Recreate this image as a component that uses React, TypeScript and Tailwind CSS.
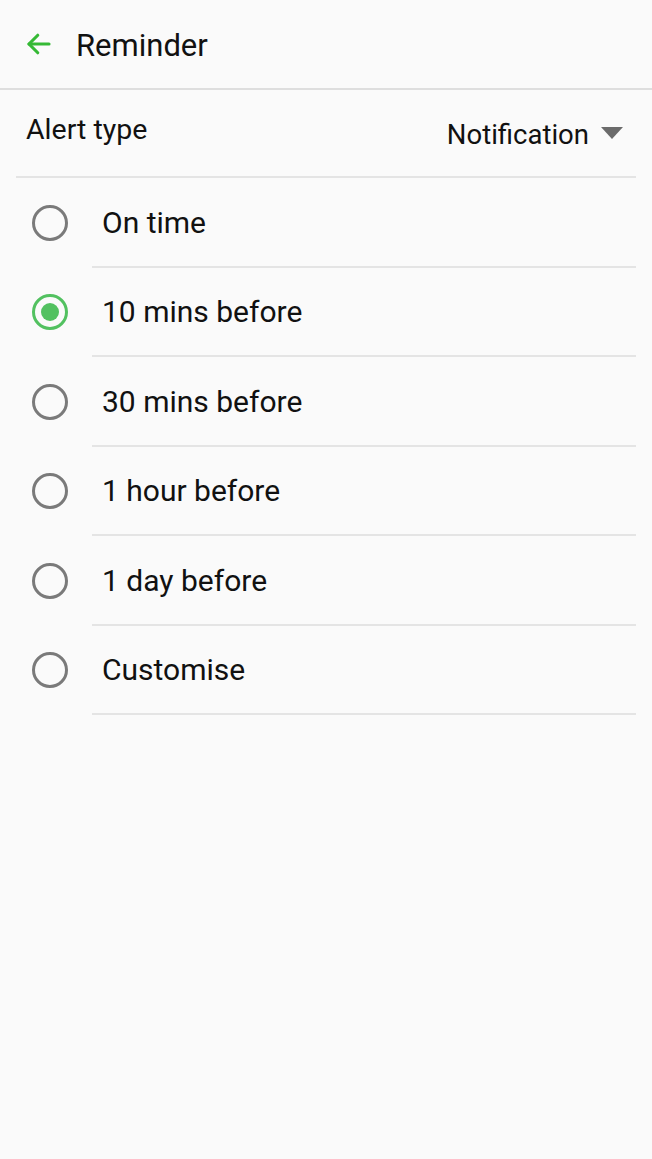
import { useState } from 'react';

const options = [
  'On time',
  '10 mins before',
  '30 mins before',
  '1 hour before',
  '1 day before',
  'Customise',
];

function Radio({ checked }: { checked: boolean }) {
  return (
    <div
      className={`w-[36px] h-[36px] rounded-full border-[3px] flex items-center justify-center ${
        checked ? 'border-[#52c160]' : 'border-[#7a7a7a]'
      }`}
    >
      {checked && <div className="w-[18px] h-[18px] rounded-full bg-[#52c160]" />}
    </div>
  );
}

export default function App() {
  const [selected, setSelected] = useState(1);

  return (
    <div className="min-h-screen bg-[#fafafa] text-[#111] font-['Roboto',sans-serif]">
      {/* Header */}
      <div className="h-[90px] flex items-center border-b-2 border-[#dedede]">
        <button className="ml-[24px] mr-[22px] text-[#35b935]">
          <svg width="30" height="30" viewBox="0 0 24 24" fill="none" stroke="currentColor" strokeWidth="2.5" strokeLinecap="round" strokeLinejoin="round">
            <path d="M20 12H4" />
            <path d="M11 5l-7 7 7 7" />
          </svg>
        </button>
        <h1 className="text-[31px] leading-none pt-[2px]">Reminder</h1>
      </div>

      {/* Alert type */}
      <div className="mx-[16px] h-[88px] border-b-2 border-[#e4e4e4] flex items-center justify-between">
        <span className="ml-[10px] text-[28.5px] leading-none -mt-[6px]">Alert type</span>
        <button className="flex items-center mr-[13px]">
          <span className="text-[27.5px] leading-none pt-[3px]">Notification</span>
          <svg className="ml-[12px]" width="22" height="12" viewBox="0 0 22 12">
            <path d="M0 0h22L11 12z" fill="#6b6b6b" />
          </svg>
        </button>
      </div>

      {/* Options */}
      <div>
        {options.map((label, i) => (
          <button
            key={label}
            onClick={() => setSelected(i)}
            className="w-full flex items-center text-left"
          >
            <div className="w-[92px] pl-[32px]">
              <Radio checked={selected === i} />
            </div>
            <div className="flex-1 mr-[16px] pl-[10px] h-[89.5px] border-b-2 border-[#e4e4e4] flex items-center">
              <span className="text-[30px] leading-none pt-[2px]">{label}</span>
            </div>
          </button>
        ))}
      </div>
    </div>
  );
}
